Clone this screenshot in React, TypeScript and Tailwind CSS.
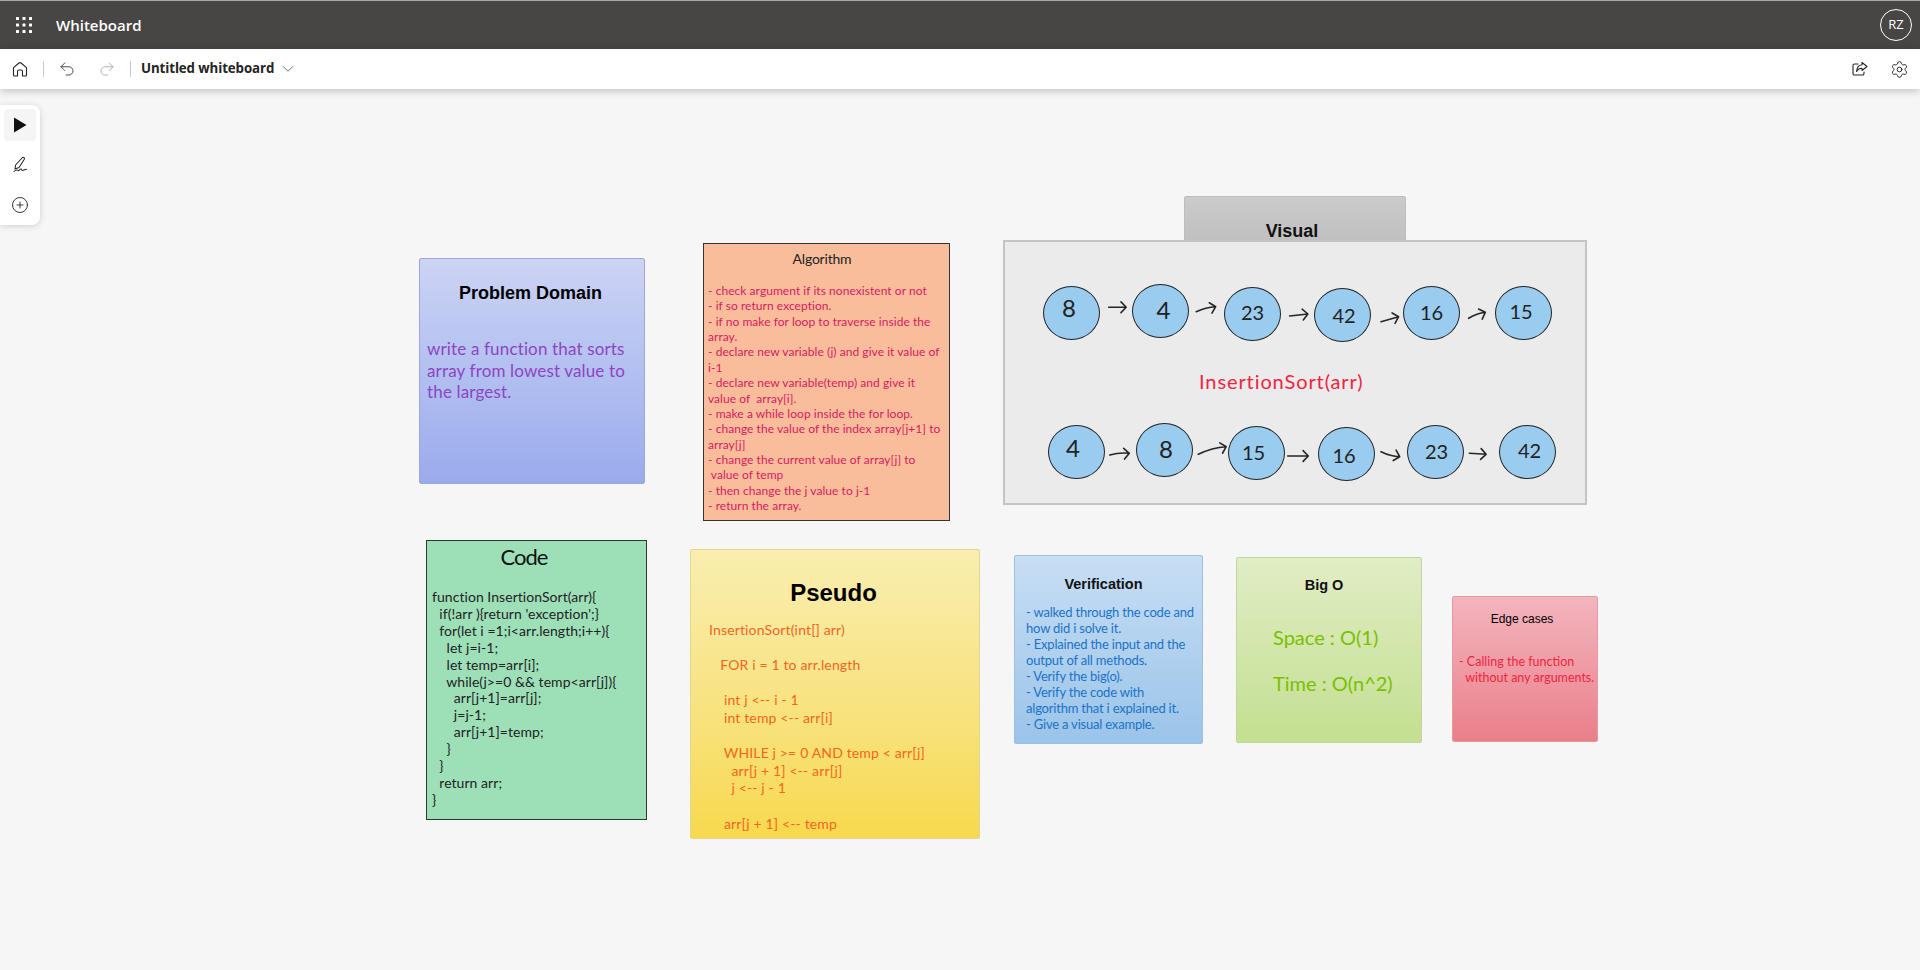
import React from "react";
import { Undo2, Redo2, ChevronDown, Settings, CirclePlus } from "lucide-react";

const hand = "font-['Lato',sans-serif] whitespace-pre font-normal";
const sans = "font-['Liberation_Sans',sans-serif]";

function Waffle() {
  return (
    <svg width="16" height="16" viewBox="0 0 16 16" fill="#fff">
      {[0, 6.5, 13].map((y) =>
        [0, 6.5, 13].map((x) => <rect key={`${x}-${y}`} x={x} y={y} width="3" height="3" rx="0.6" />)
      )}
    </svg>
  );
}

function HomeIcon() {
  return (
    <svg width="16" height="16" viewBox="0 0 16 16" fill="none" stroke="#242424" strokeWidth="1.1" strokeLinejoin="round">
      <path d="M1.5 6.6 7 2a1.5 1.5 0 0 1 2 0l5.500 4.600V14a1 1 0 0 1-1 1H10.500V10.500a1.500 1.500 0 0 0-1.500-1.500H7a1.500 1.500 0 0 0-1.500 1.500V15H2.500a1 1 0 0 1-1-1Z" />
    </svg>
  );
}

function ShareIcon() {
  return (
    <svg width="16" height="16" viewBox="0 0 16 16" fill="none" stroke="#242424" strokeWidth="1.1" strokeLinejoin="round" strokeLinecap="round">
      <path d="M6 3H2.500A1.500 1.500 0 0 0 1 4.500v8A1.500 1.500 0 0 0 2.500 14h8a1.500 1.500 0 0 0 1.500-1.500V11" />
      <path d="M10 1.500 15 5.500 10 9.500V7.300C7.500 7.300 5.800 8.300 4.500 10.500 4.800 7 6.800 4.100 10 3.800Z" />
    </svg>
  );
}

function PenIcon() {
  return (
    <svg width="18" height="18" viewBox="0 0 18 18" fill="none" stroke="#242424" strokeWidth="1.05" strokeLinejoin="round" strokeLinecap="round">
      <path d="M11.500 1.500c1-.8 2.500.5 1.800 1.700L8 11.500 4 13l.6-4Z" />
      <path d="M3 15.500c1.500-1.500 3-2 4-1 .8.800 2-2 3-1.500s.5 1.500 1.500 1.500 2-1 4-1.200" />
    </svg>
  );
}

function Arrow({ x1, y1, x2, y2, bend = 0 }: { x1: number; y1: number; x2: number; y2: number; bend?: number }) {
  const a = Math.atan2(y2 - y1, x2 - x1);
  const h = 7.5;
  const hx1 = x2 - h * Math.cos(a - 0.8);
  const hy1 = y2 - h * Math.sin(a - 0.8);
  const hx2 = x2 - h * Math.cos(a + 0.8);
  const hy2 = y2 - h * Math.sin(a + 0.8);
  const mx = (x1 + x2) / 2;
  const my = (y1 + y2) / 2 + bend;
  return <path d={`M${x1} ${y1}Q${mx} ${my} ${x2} ${y2}M${hx1} ${hy1}L${x2} ${y2}L${hx2} ${hy2}`} />;
}

function Lines({ lines, className }: { lines: string[]; className: string }) {
  return (
    <div className={className}>
      {lines.map((l, i) => (
        <div key={i}>{l || "\u00a0"}</div>
      ))}
    </div>
  );
}

function Node({ label, pos, big, shift }: { label: string; pos: string; big?: boolean; shift: string }) {
  return (
    <div className={`absolute ${pos} w-[57px] h-[54px] rounded-[50%] bg-[#9accf0] border border-[#222] flex items-center justify-center`}>
      <span className={`${hand} ${big ? "text-[24px]" : "text-[20px]"} leading-none text-[#222] ${shift}`}>{label}</span>
    </div>
  );
}

export default function App() {
  return (
    <div className="w-[1920px] h-[970px] flex flex-col overflow-hidden bg-[#f6f6f6] font-['Open_Sans',sans-serif]">
      <header className="h-[49px] shrink-0 bg-[#484644] border-t border-t-[#a8a8a8] flex items-center justify-between pl-[16px] pr-[8px] text-white">
        <div className="flex items-center gap-[24px]">
          <Waffle />
          <span className="text-[15px] font-semibold">Whiteboard</span>
        </div>
        <div className="w-[32px] h-[32px] rounded-full border border-white flex items-center justify-center text-[13px]">RZ</div>
      </header>

      <div className="h-[40px] shrink-0 bg-white flex items-center justify-between shadow-[0_2px_8px_rgba(0,0,0,0.22)] z-10 relative pl-[12px] pr-[11px]">
        <div className="flex items-center">
          <HomeIcon />
          <div className="w-px h-[16px] bg-[#c8c8c8] ml-[15px]" />
          <Undo2 size={18} strokeWidth={1.1} color="#242424" className="ml-[14px]" />
          <Redo2 size={18} strokeWidth={1.1} color="#a6a6a6" className="ml-[22px]" />
          <div className="w-px h-[16px] bg-[#c8c8c8] ml-[14px]" />
          <span className="ml-[10px] text-[13.300px] font-bold text-[#242424] tracking-[-0.1px]">Untitled whiteboard</span>
          <ChevronDown size={18} strokeWidth={1} color="#424242" className="ml-[5px]" />
        </div>
        <div className="flex items-center gap-[22px]">
          <ShareIcon />
          <Settings size={19} strokeWidth={1.2} color="#242424" />
        </div>
      </div>

      <main className="relative flex-1 -mt-px">
        <div className="absolute left-0 top-[17px] w-[40px] h-[120px] bg-white rounded-r-[8px] shadow-[0_1px_6px_rgba(0,0,0,0.16)] flex flex-col items-center pt-[4px]">
          <div className="w-[32px] h-[32px] rounded-[4px] bg-[#f5f5f5] flex items-center justify-center">
            <svg width="14" height="16" viewBox="0 0 14 16" fill="#111"><path d="M1 0.500 13.500 8 1 15.500Z" /></svg>
          </div>
          <div className="mt-[7px] h-[33px] flex items-center justify-center"><PenIcon /></div>
          <div className="mt-[7px] h-[33px] flex items-center justify-center"><CirclePlus size={18} strokeWidth={1.1} color="#111" /></div>
        </div>

        {/* Problem Domain */}
        <section className="absolute left-[419px] top-[170px] w-[226px] h-[226px] rounded-[2px] border border-[#9aa9d8] bg-gradient-to-b from-[#ccd4f4] to-[#9aabec] pt-[22px]">
          <h2 className={`${sans} text-center text-[18px] leading-[24px] font-bold text-black pr-[3px]`}>Problem Domain</h2>
          <Lines className={`${hand} mt-[33px] pl-[7px] text-[17px] leading-[21.500px] text-[#8e44c4] tracking-[0.15px]`} lines={["write a function that sorts", "array from lowest value to", "the largest."]} />
        </section>

        {/* Algorithm */}
        <section className="absolute left-[703px] top-[155px] w-[247px] h-[278px] border border-[#333] bg-[#f9bd9c] pt-[6px]">
          <h2 className={`${hand} text-center text-[14px] leading-[18px] text-[#222] pr-[9px] tracking-[-0.2px]`}>Algorithm</h2>
          <Lines
            className={`${hand} mt-[15px] pl-[4px] text-[12px] leading-[15.360px] text-[#d81b60] tracking-[0.05px]`}
            lines={[
              "- check argument if its nonexistent or not",
              "- if so return exception.",
              "- if no make for loop to traverse inside the",
              "array.",
              "- declare new variable (j) and give it value of",
              "i-1",
              "- declare new variable(temp) and give it",
              "value of  array[i].",
              "- make a while loop inside the for loop.",
              "- change the value of the index array[j+1] to",
              "array[j]",
              "- change the current value of array[j] to",
              " value of temp",
              "- then change the j value to j-1",
              "- return the array.",
            ]}
          />
        </section>

        {/* Visual */}
        <section className="absolute left-[1184px] top-[108px] w-[222px] h-[46px] rounded-t-[2px] border border-[#bdbdbd] bg-gradient-to-b from-[#cbcbcb] to-[#c0c0c0] pt-[23px] pr-[6px]">
          <h2 className={`${sans} text-center text-[18px] leading-[22px] font-bold text-[#111]`}>Visual</h2>
        </section>
        <div className="absolute left-[1003px] top-[152px] w-[584px] h-[265px] border-2 border-[#c4c4c4] bg-[#ebebeb]" />

        <Node label="8" big pos="left-[1043px] top-[198px]" shift="-translate-x-[2.500px] -translate-y-[5px]" />
        <Node label="4" big pos="left-[1132px] top-[196px]" shift="translate-x-[3px] -translate-y-[1px]" />
        <Node label="23" pos="left-[1224px] top-[199px]" shift="-translate-y-[2px]" />
        <Node label="42" pos="left-[1314px] top-[200px]" shift="translate-x-[1.500px]" />
        <Node label="16" pos="left-[1403px] top-[198px]" shift="-translate-y-[1px]" />
        <Node label="15" pos="left-[1495px] top-[198px]" shift="-translate-x-[2.500px] -translate-y-[2px]" />

        <Node label="4" big pos="left-[1048px] top-[337px]" shift="-translate-x-[3.500px] -translate-y-[4px]" />
        <Node label="8" big pos="left-[1136px] top-[335px]" shift="translate-x-[1.500px] -translate-y-[1px]" />
        <Node label="15" pos="left-[1228px] top-[338px]" shift="-translate-x-[3px] -translate-y-[1px]" />
        <Node label="16" pos="left-[1318px] top-[339px]" shift="-translate-x-[2.500px] translate-y-[1px]" />
        <Node label="23" pos="left-[1407px] top-[337px]" shift="translate-x-[1px] -translate-y-[1px]" />
        <Node label="42" pos="left-[1499px] top-[337px]" shift="translate-x-[2px] -translate-y-[2px]" />

        <svg className="absolute left-[1004px] top-[152px]" width="583" height="265" viewBox="1004 240 583 265" fill="none" stroke="#262626" strokeWidth="1.6" strokeLinecap="round" strokeLinejoin="round">
          <Arrow x1={1108.7} y1={307.3} x2={1126.2} y2={307.3} />
          <Arrow x1={1196.2} y1={311.7} x2={1215.7} y2={306.7} bend={-2} />
          <Arrow x1={1289.6} y1={316} x2={1307.9} y2={314} />
          <Arrow x1={1381} y1={321.7} x2={1398.6} y2={316.7} />
          <Arrow x1={1468.6} y1={318.3} x2={1485.3} y2={312.3} bend={-2} />
          <Arrow x1={1109.8} y1={455} x2={1129.3} y2={453.3} bend={-2} />
          <Arrow x1={1198.2} y1={454.3} x2={1226.2} y2={446.7} bend={-3} />
          <Arrow x1={1287.7} y1={456} x2={1308.3} y2={456} />
          <Arrow x1={1381} y1={451.7} x2={1399.7} y2={456.7} bend={2} />
          <Arrow x1={1469.4} y1={453.3} x2={1486.1} y2={454.3} />
        </svg>
        <span className={`${hand} absolute left-[1199px] top-[281px] text-[20px] leading-[24px] text-[#f0243f] tracking-[0.9px]`}>InsertionSort(arr)</span>

        {/* Code */}
        <section className="absolute left-[426px] top-[452px] w-[221px] h-[280px] border border-[#333] bg-[#9de0b8] pt-[2px]">
          <h2 className={`${hand} text-center text-[22px] leading-[28px] text-[#111] pr-[25px] tracking-[-1px]`}>Code</h2>
          <Lines
            className={`${hand} mt-[18px] pl-[5px] text-[14px] leading-[16.900px] text-[#222] tracking-[0.05px]`}
            lines={[
              "function InsertionSort(arr){",
              "  if(!arr ){return 'exception';}",
              "  for(let i =1;i<arr.length;i++){",
              "    let j=i-1;",
              "    let temp=arr[i];",
              "    while(j>=0 && temp<arr[j]){",
              "      arr[j+1]=arr[j];",
              "      j=j-1;",
              "      arr[j+1]=temp;",
              "    }",
              "  }",
              "  return arr;",
              "}",
            ]}
          />
        </section>

        {/* Pseudo */}
        <section className="absolute left-[690px] top-[461px] w-[290px] h-[290px] rounded-[2px] border border-[#e3d68f] bg-gradient-to-b from-[#f9eeb0] to-[#f7d94c] pt-[29px]">
          <h2 className={`${sans} text-center text-[24px] leading-[28px] font-bold text-black pr-[3px]`}>Pseudo</h2>
          <Lines
            className={`${hand} mt-[14px] pl-[18px] text-[14px] leading-[17.600px] text-[#f4651f] tracking-[0.15px]`}
            lines={[
              "InsertionSort(int[] arr)",
              "",
              "   FOR i = 1 to arr.length",
              "",
              "    int j <-- i - 1",
              "    int temp <-- arr[i]",
              "",
              "    WHILE j >= 0 AND temp < arr[j]",
              "      arr[j + 1] <-- arr[j]",
              "      j <-- j - 1",
              "",
              "    arr[j + 1] <-- temp",
            ]}
          />
        </section>

        {/* Verification */}
        <section className="absolute left-[1014px] top-[467px] w-[189px] h-[189px] rounded-[2px] border border-[#9cc0e4] bg-gradient-to-b from-[#c7def4] to-[#9bc4e9] pt-[18px]">
          <h2 className={`${sans} text-center text-[14.500px] leading-[20px] font-bold text-[#111] pr-[10px]`}>Verification</h2>
          <Lines
            className={`${hand} mt-[10px] pl-[11px] text-[13px] leading-[16px] text-[#1a73c9] tracking-[-0.2px]`}
            lines={[
              "- walked through the code and",
              "how did i solve it.",
              "- Explained the input and the",
              "output of all methods.",
              "- Verify the big(o).",
              "- Verify the code with",
              "algorithm that i explained it.",
              "- Give a visual example.",
            ]}
          />
        </section>

        {/* Big O */}
        <section className="absolute left-[1236px] top-[469px] w-[186px] h-[186px] rounded-[2px] border border-[#c0d69c] bg-gradient-to-b from-[#e1edc5] to-[#c3df90] pt-[17px]">
          <h2 className={`${sans} text-center text-[14.500px] leading-[20px] font-bold text-[#111] pr-[10px]`}>Big O</h2>
          <Lines
            className={`${hand} mt-[31px] pl-[36px] text-[20px] leading-[23.200px] text-[#7ac000]`}
            lines={["Space : O(1)", "", "Time : O(n^2)"]}
          />
        </section>

        {/* Edge cases */}
        <section className="absolute left-[1452px] top-[508px] w-[146px] h-[146px] rounded-[2px] border border-[#e39aa3] bg-gradient-to-b from-[#f3b5be] to-[#e97f8a] pt-[14px]">
          <h2 className={`${sans} text-center text-[12px] leading-[16px] text-black pr-[6px]`}>Edge cases</h2>
          <Lines
            className={`${hand} mt-[27px] pl-[6px] text-[12.500px] leading-[16px] text-[#f0243f]`}
            lines={["- Calling the function", "  without any arguments."]}
          />
        </section>
      </main>
    </div>
  );
}
